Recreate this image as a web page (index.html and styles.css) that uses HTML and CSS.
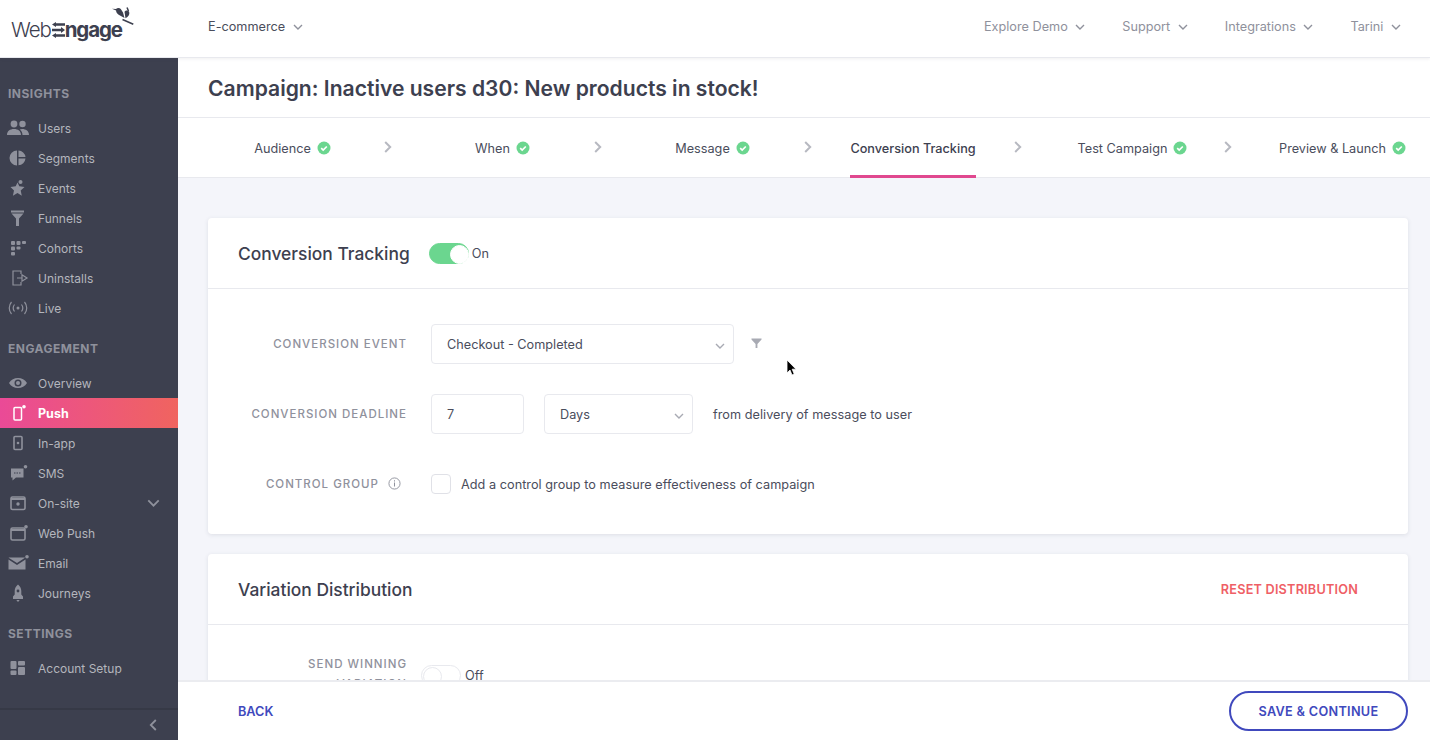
FILE: index.html
```html
<!DOCTYPE html>
<html lang="en">

<head>
  <meta charset="UTF-8">
  <title>Campaign: Inactive users d30</title>
  <link rel="stylesheet" href="styles.css">
</head>

<body>
  <svg class="defs" width="0" height="0">
    <symbol id="chev" viewBox="0 0 10 6"><path d="M1 1l4 4 4-4" fill="none" stroke="currentColor" stroke-width="1.4" /></symbol>
    <symbol id="tick" viewBox="0 0 14 14"><circle cx="7" cy="7" r="6.5" fill="#6bd68f" /><path d="M4.2 7.2l2 1.9 3.6-3.6" fill="none" stroke="#fff" stroke-width="1.7" /></symbol>
    <symbol id="step" viewBox="0 0 8 12"><path d="M1.2 1l5 5-5 5" fill="none" stroke="currentColor" stroke-width="2" /></symbol>
  </svg>

  <header class="topbar">
    <div class="logo" aria-label="WebEngage">
      <span class="logo-web">Web</span>
      <svg class="logo-e" viewBox="0 0 13 16" width="13" height="16">
        <path d="M3 2.500h10M0 8h10M3 13.500h10" stroke="#3d404f" stroke-width="2.400" fill="none" />
        <path d="M4 0L0 2.500 4 5zM9 5L13 8 9 11zM4 11L0 13.500 4 16z" fill="#3d404f" />
      </svg>
      <span class="logo-rest">ngage</span>
      <svg class="logo-bird" viewBox="0 0 22 18" width="22" height="18">
        <path d="M0 1.800l4 .3C5 .8 7.500.6 8.800 2L11 5.500l1.500 5.500-4.500-2.500C5.500 7.300 4 5.500 4.100 3.500z" fill="#3d404f" />
        <path d="M12.500 4.800c1.200-1.800 3.800-1.800 4.700.2.700 2.200-.8 4.800-3.700 6.200z" fill="#3d404f" />
        <path d="M10.500 12.500l10.800 4.800M15 .5l1.500 3.500" stroke="#3d404f" stroke-width="1.500" fill="none" />
      </svg>
    </div>
    <a class="project">E-commerce <svg class="chev"><use href="#chev" /></svg></a>
    <nav class="topnav">
      <a>Explore Demo <svg class="chev"><use href="#chev" /></svg></a>
      <a>Support <svg class="chev"><use href="#chev" /></svg></a>
      <a>Integrations <svg class="chev"><use href="#chev" /></svg></a>
      <a>Tarini <svg class="chev"><use href="#chev" /></svg></a>
    </nav>
  </header>

  <div class="app">
    <aside class="sidebar">
      <div class="menu">
        <h4 class="first">INSIGHTS</h4>
        <a class="item"><svg viewBox="0 0 22 16"><circle cx="7" cy="4" r="3.400" /><circle cx="15.500" cy="4" r="3.200" /><path d="M0 15c0-4 3-6 7-6s7 2 7 6zM15 9c4 0 7 2 7 6h-6.500c0-2-.8-4-2.700-5.500z" /></svg>Users</a>
        <a class="item"><svg viewBox="0 0 22 16"><path d="M10 .5v15a7.500 7.500 0 0 1 0-15zM11.500.5a7.500 7.500 0 0 1 7 6.500h-7zM11.500 8.500h7a7.500 7.500 0 0 1-7 6.800z" /></svg>Segments</a>
        <a class="item"><svg viewBox="0 0 22 16"><path d="M10.500 2.500l1.800 3.800 5.200.6-3.800 3.500 1.100 5.300-4.300-2.600-4.600 2.600 1.100-5.300L3.500 6.900l5.200-.6z" /><circle cx="13.500" cy="2" r="2" /></svg>Events</a>
        <a class="item"><svg viewBox="0 0 22 16"><path d="M4 .5h13v2H4zM4.500 3.500h12l-4.500 5v7.500h-3V8.500z" /></svg>Funnels</a>
        <a class="item"><svg viewBox="0 0 22 16"><rect x="4" y="1" width="4" height="4" rx="1" /><rect x="9.500" y="1" width="4" height="4" rx="1" /><rect x="15" y="1" width="4" height="3" rx="1" /><rect x="4" y="6.500" width="4" height="4" rx="1" /><rect x="9.500" y="6.500" width="4" height="3" rx="1" /><rect x="4" y="12" width="4" height="3.500" rx="1" /></svg>Cohorts</a>
        <a class="item"><svg viewBox="0 0 22 16"><path d="M14 4V1H6v14h8v-3M10 8h5V4.800L20 8l-5 3.200V8" fill="none" stroke="currentColor" stroke-width="1.200" /></svg>Uninstalls</a>
        <a class="item"><svg viewBox="0 0 22 16"><circle cx="11" cy="8" r="1.500" /><path d="M7.500 4.500c-1.500 2-1.500 5 0 7M14.500 4.500c1.500 2 1.500 5 0 7M4.500 2c-3 3.500-3 8.500 0 12M17.500 2c3 3.500 3 8.500 0 12" fill="none" stroke="currentColor" stroke-width="1.200" /></svg>Live</a>

        <h4>ENGAGEMENT</h4>
        <a class="item"><svg viewBox="0 0 22 16"><path fill-rule="evenodd" d="M2 8c2-3.500 5.300-5 9-5s7 1.500 9 5c-2 3.500-5.300 5-9 5s-7-1.500-9-5zm9-3.500a3.500 3.500 0 1 0 0 7 3.500 3.500 0 0 0 0-7z" /><circle cx="11" cy="8" r="2" /></svg>Overview</a>
        <a class="item active"><svg viewBox="0 0 22 16"><rect x="7" y="2.500" width="7.500" height="12.500" rx="1" fill="none" stroke="currentColor" stroke-width="1.500" /><circle cx="17" cy="1.800" r="1.800" /></svg>Push</a>
        <a class="item"><svg viewBox="0 0 22 16"><rect x="7" y="1.500" width="8" height="13" rx="1" fill="none" stroke="currentColor" stroke-width="1.600" /><circle cx="11" cy="8" r="1.300" /></svg>In-app</a>
        <a class="item"><svg viewBox="0 0 22 16"><path d="M4 3.500h12.500v9H9l-3.500 3v-3H4z" /><path d="M7 8h7" stroke="#3d404f" stroke-width="1.200" stroke-dasharray="1.500 1" /><circle cx="18.500" cy="1.800" r="1.800" /></svg>SMS</a>
        <a class="item"><svg viewBox="0 0 22 16"><rect x="4" y="2" width="14" height="12.500" rx="1.500" fill="none" stroke="currentColor" stroke-width="1.600" /><path d="M4 3h14v2H4z" /><circle cx="11" cy="9" r="1.700" /></svg>On-site<svg class="item-chev"><use href="#chev" /></svg></a>
        <a class="item"><svg viewBox="0 0 22 16"><rect x="4" y="3" width="14" height="12" rx="1.500" fill="none" stroke="currentColor" stroke-width="1.600" /><path d="M4 4h14v2H4z" /><circle cx="19" cy="1.800" r="1.800" /></svg>Web Push</a>
        <a class="item"><svg viewBox="0 0 22 16"><path d="M2 2.500h15.500a1 1 0 0 1 .5.200L10 8 1.600 2.700a1 1 0 0 1 .4-.2zM1.500 4.500L10 10l8.500-5.500v10H1.500z" /><circle cx="20" cy="1.800" r="1.800" /></svg>Email</a>
        <a class="item"><svg class="tall" viewBox="0 0 22 18"><path d="M11 .5c2.200 1.700 3.300 4 3.300 6.500v3.500l1.700 2v2.500H6v-2.500l1.700-2V7c0-2.500 1.100-4.800 3.300-6.500z" /><path d="M9.300 16h3.400L11 18z" /><circle cx="11" cy="7" r="1.400" fill="#3d404f" /></svg>Journeys</a>

        <h4>SETTINGS</h4>
        <a class="item"><svg viewBox="0 0 22 16"><rect x="3.500" y="1" width="6" height="8" rx="1" /><rect x="11" y="1" width="7" height="4.500" rx="1" /><rect x="3.500" y="10.500" width="6" height="4.500" rx="1" /><rect x="11" y="7" width="7" height="8" rx="1" /></svg>Account Setup</a>
      </div>
      <div class="collapse"><svg viewBox="0 0 8 12" width="8" height="12"><path d="M6.800 1l-5 5 5 5" fill="none" stroke="currentColor" stroke-width="1.800" /></svg></div>
    </aside>

    <main class="main">
      <h1 class="title">Campaign: Inactive users d30: New products in stock!</h1>

      <div class="steps">
        <div class="step done"><a>Audience <svg class="tick"><use href="#tick" /></svg></a></div>
        <svg class="step-arrow"><use href="#step" /></svg>
        <div class="step done"><a>When <svg class="tick"><use href="#tick" /></svg></a></div>
        <svg class="step-arrow"><use href="#step" /></svg>
        <div class="step done"><a>Message <svg class="tick"><use href="#tick" /></svg></a></div>
        <svg class="step-arrow"><use href="#step" /></svg>
        <div class="step current"><a>Conversion Tracking</a></div>
        <svg class="step-arrow"><use href="#step" /></svg>
        <div class="step done"><a>Test Campaign <svg class="tick"><use href="#tick" /></svg></a></div>
        <svg class="step-arrow"><use href="#step" /></svg>
        <div class="step done"><a>Preview &amp; Launch <svg class="tick"><use href="#tick" /></svg></a></div>
      </div>

      <div class="content">
        <section class="card">
          <div class="card-head">
            <h2>Conversion Tracking</h2>
            <span class="toggle on"></span>
            <span class="toggle-label">On</span>
          </div>
          <div class="card-body">
            <div class="row">
              <label>CONVERSION EVENT</label>
              <div class="select event">Checkout - Completed <svg class="chev"><use href="#chev" /></svg></div>
              <svg class="filter" viewBox="0 0 12 12" width="11" height="11"><path d="M.5.500h11v1.200L7 6.500V11H5V6.500L.5 1.700z" /></svg>
            </div>
            <div class="row">
              <label>CONVERSION DEADLINE</label>
              <div class="input">7</div>
              <div class="select days">Days <svg class="chev"><use href="#chev" /></svg></div>
              <span class="hint">from delivery of message to user</span>
            </div>
            <div class="row short">
              <label>CONTROL GROUP <svg class="info" viewBox="0 0 14 14" width="13" height="13"><circle cx="7" cy="7" r="6" fill="none" stroke="currentColor" /><path d="M7 6v4.200M7 3.600v1.200" stroke="currentColor" stroke-width="1.100" /></svg></label>
              <span class="checkbox"></span>
              <span class="check-label">Add a control group to measure effectiveness of campaign</span>
            </div>
          </div>
        </section>

        <section class="card">
          <div class="card-head">
            <h2>Variation Distribution</h2>
            <a class="reset">RESET DISTRIBUTION</a>
          </div>
          <div class="winning">
            <label>SEND WINNING VARIATION</label>
            <span class="toggle"></span>
            <span class="toggle-label off">Off</span>
          </div>
        </section>
      </div>

      <footer class="footer">
        <a class="back">BACK</a>
        <a class="save">SAVE &amp; CONTINUE</a>
      </footer>
    </main>
  </div>

  <svg class="cursor" viewBox="0 0 12 18" width="12" height="18"><path d="M1 1v13l3-3 2 5 2.200-1-2-4.800H10z" fill="#000" stroke="#fff" stroke-width=".8" /></svg>
</body>

</html>
```

FILE: styles.css
```css
/* campaign editor - conversion tracking step */
* {
  box-sizing: border-box;
}

html,
body {
  height: 100%;
}

body {
  margin: 0;
  font-family: Inter, "Noto Sans", sans-serif;
  font-size: 12.700px;
  color: #4a4d5c;
  background-color: #fff;
  display: flex;
  flex-direction: column;
  overflow: hidden;
  position: relative;
}

.defs {
  position: absolute;
}

h1,
h2,
h4 {
  margin: 0;
}

.chev {
  width: 10px;
  height: 6px;
  margin-left: 4px;
  vertical-align: 1px;
}

/* top bar */
.topbar {
  height: 58px;
  flex: none;
  display: flex;
  align-items: center;
  padding: 0 29px 4px 11px;
  border-bottom: 1px solid #e8e9ee;
  box-shadow: 0 1px 3px rgba(61, 64, 79, 0.08);
  position: relative;
  z-index: 2;
  background-color: #fff;
}

.logo {
  width: 197px;
  display: flex;
  align-items: center;
  font-size: 20.500px;
  color: #3d404f;
  letter-spacing: -1.100px;
  position: relative;
  top: 3px;
}

.logo-web {
  font-weight: 300;
}

.logo-e {
  margin: 1px 0 0 1px;
}

.logo-rest {
  font-weight: 700;
}

.logo-bird {
  position: absolute;
  left: 101px;
  top: -10px;
}

.project {
  color: #4a4d5c;
}

.project .chev {
  color: #8f919c;
}

.topnav {
  margin-left: auto;
  display: flex;
  gap: 37px;
  color: #8f919c;
}

/* sidebar */
.app {
  flex: 1;
  display: flex;
  min-height: 0;
}

.sidebar {
  width: 178px;
  flex: none;
  background-color: #3d404f;
  display: flex;
  flex-direction: column;
}

.menu {
  flex: 1;
}

.sidebar h4 {
  font-size: 12px;
  font-weight: 700;
  letter-spacing: 0.5px;
  color: #8f919c;
  line-height: 15px;
  padding: 18px 0 12px 8px;
  height: 45px;
}

.sidebar h4.first {
  height: 55px;
  padding-top: 28px;
}

.item {
  height: 30px;
  display: flex;
  align-items: center;
  padding-left: 7px;
  font-size: 12px;
  color: #b4b6bd;
  position: relative;
}

.item svg {
  width: 22px;
  height: 16px;
  margin-right: 9px;
  fill: #8f919c;
  color: #8f919c;
}

.item svg.tall {
  height: 18px;
}

.item .item-chev {
  position: absolute;
  right: 18px;
  top: 11px;
  width: 13px;
  height: 8px;
  margin: 0;
}

.item.active {
  color: #fff;
  font-size: 12.500px;
  font-weight: 700;
  background: linear-gradient(90deg, #ea4a97, #f0645f);
}

.item.active svg {
  fill: #fff;
  color: #fff;
}

.collapse {
  height: 32px;
  flex: none;
  border-top: 2px solid #363946;
  color: #8f919c;
  display: flex;
  align-items: center;
  justify-content: flex-end;
  padding-right: 21px;
}

/* main column */
.main {
  flex: 1;
  min-width: 0;
  display: flex;
  flex-direction: column;
  overflow: hidden;
}

.title {
  height: 60px;
  flex: none;
  padding: 0 30px;
  font-size: 21.100px;
  font-weight: 600;
  line-height: 61px;
  color: #3d404f;
  border-bottom: 1px solid #e8e9ee;
}

.steps {
  height: 60px;
  flex: none;
  display: flex;
  align-items: center;
  padding-left: 5px;
  border-bottom: 1px solid #e8e9ee;
}

.step {
  width: 200px;
  flex: none;
  height: 100%;
  display: flex;
  justify-content: center;
  color: #4a4d5c;
}

.step.done {
  padding-left: 19px;
}

.step a {
  display: flex;
  align-items: center;
  gap: 6px;
  height: 60px;
}

.step.current a {
  color: #3d404f;
  font-weight: 500;
  border-bottom: 3px solid #e0488f;
  padding-top: 3px;
}

.tick {
  width: 14px;
  height: 14px;
}

.step-arrow {
  width: 8px;
  height: 12px;
  flex: none;
  margin: -2px 1px 0;
  color: #b7b9c1;
}

.content {
  flex: 1;
  min-height: 0;
  background-color: #f4f5fa;
  padding: 40px 22px 0 30px;
  overflow: hidden;
}

.card {
  background-color: #fff;
  border-radius: 4px;
  box-shadow: 0 1px 4px rgba(61, 64, 79, 0.12);
  margin-bottom: 20px;
}

.card-head {
  height: 71px;
  display: flex;
  align-items: center;
  padding: 0 50px 0 30px;
  border-bottom: 1px solid #e8e9ee;
}

.card-head h2 {
  font-size: 17.400px;
  font-weight: 500;
  color: #3d404f;
}

.toggle {
  width: 40px;
  height: 21px;
  border-radius: 11px;
  background-color: #fff;
  border: 1px solid #e8e9ee;
  position: relative;
  flex: none;
}

.toggle::after {
  content: "";
  position: absolute;
  left: 1px;
  top: 1px;
  width: 17px;
  height: 17px;
  border-radius: 50%;
  background-color: #fff;
  border: 1px solid #e8e9ee;
}

.toggle.on {
  background-color: #6bd68f;
  border-color: #6bd68f;
  margin-left: 19px;
}

.toggle.on::after {
  left: 20px;
  border-color: #fff;
}

.toggle-label {
  margin-left: 3px;
}

.card-body {
  padding: 35px 0 30px;
}

.row {
  height: 40px;
  display: flex;
  align-items: center;
  margin-bottom: 30px;
}

.row.short {
  margin: 0;
}

.row label {
  width: 199px;
  flex: none;
  text-align: right;
  margin-right: 24px;
  white-space: nowrap;
}

label {
  font-size: 11.500px;
  font-weight: 500;
  letter-spacing: 1px;
  color: #8f919c;
}

.row.short label {
  margin-right: 30px;
  width: 193px;
}

.info {
  margin-left: 5px;
  vertical-align: -2px;
}

.select,
.input {
  height: 40px;
  border: 1px solid #e8e9ee;
  border-radius: 4px;
  display: flex;
  align-items: center;
  padding: 0 15px;
  color: #4a4d5c;
  position: relative;
}

.select .chev {
  position: absolute;
  right: 8px;
  top: 18px;
  color: #a8aab3;
}

.event {
  width: 303px;
}

.filter {
  margin: -2px 0 0 17px;
  fill: #a8aab3;
}

.input {
  width: 93px;
}

.days {
  width: 149px;
  margin-left: 20px;
}

.hint {
  margin-left: 20px;
  letter-spacing: 0.03px;
}

.checkbox {
  width: 20px;
  height: 20px;
  border: 1px solid #e0e1e7;
  border-radius: 4px;
  flex: none;
}

.check-label {
  margin-left: 10px;
  letter-spacing: 0.03px;
}

.reset {
  margin-left: auto;
  font-weight: 600;
  color: #ef5f66;
  letter-spacing: 0.2px;
}

.winning {
  height: 60px;
  padding: 29px 0 0 69px;
  display: flex;
  align-items: flex-start;
}

.winning label {
  width: 130px;
  text-align: right;
  line-height: 20px;
  margin-right: 14px;
}

.winning .toggle {
  margin-top: 11px;
}

.winning .off {
  margin-top: 14px;
  margin-left: 4px;
}

/* bottom action bar */
.footer {
  height: 60px;
  flex: none;
  background-color: #fff;
  border-top: 2px solid #ebecf0;
  display: flex;
  align-items: center;
  justify-content: space-between;
  padding: 0 22px 0 60px;
  position: relative;
  z-index: 1;
}

.back {
  font-weight: 600;
  color: #4049bd;
}

.save {
  width: 179px;
  height: 40px;
  border: 2px solid #4049bd;
  border-radius: 20px;
  display: flex;
  align-items: center;
  justify-content: center;
  font-weight: 600;
  letter-spacing: 0.3px;
  color: #4049bd;
}

.cursor {
  position: absolute;
  left: 786px;
  top: 359px;
  z-index: 5;
}
```
